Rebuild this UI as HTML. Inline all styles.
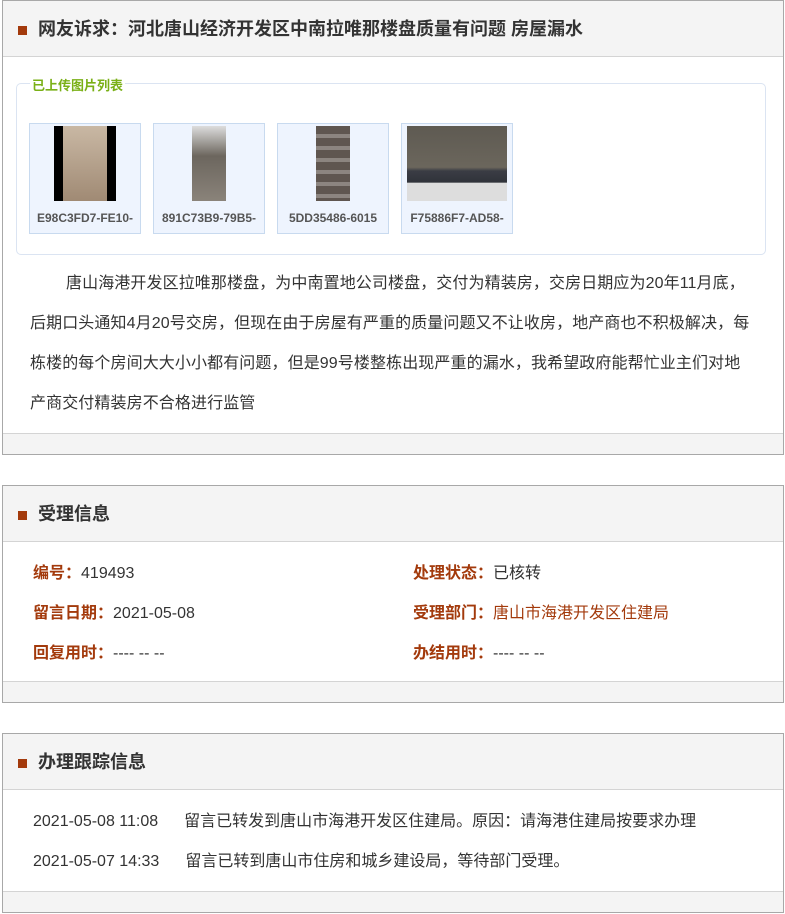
<!DOCTYPE html>
<html><head><meta charset="utf-8"><style>
*{margin:0;padding:0;box-sizing:border-box}
body{width:785px;height:914px;background:#fff;font-family:"Liberation Sans","Noto Sans CJK SC",sans-serif;color:#333;position:relative;overflow:hidden}
.p{position:absolute;left:2px;width:782px;border:1px solid #a8a8a8;background:#fff}
.h{height:56px;background:#f4f4f4;border-bottom:1px solid #d4d4d4;font-size:18px;font-weight:bold;color:#333;line-height:56px;padding-left:35px;position:relative}
.h:before{content:"";position:absolute;left:15px;top:25px;width:9px;height:9px;background:#a33a0c}
.f{position:absolute;left:0;right:0;bottom:0;height:21px;background:#f4f4f4;border-top:1px solid #d4d4d4}
fieldset{position:absolute;left:16px;top:83px;width:750px;height:172px;border:1px solid #dbe4f2;border-radius:5px}
.lg{position:absolute;left:30px;top:75px;background:#fff;color:#7ab017;font-size:13px;font-weight:bold;padding:0 2px}
.t{position:absolute;top:123px;width:112px;height:111px;background:#eef4fe;border:1px solid #c8daef;text-align:center}
.t .im{position:absolute;top:2px;height:75px}
.t .c{position:absolute;left:0;right:0;top:87px;font-size:12px;font-weight:bold;color:#555;white-space:nowrap;overflow:hidden}
.b{position:absolute;left:30px;top:264px;font-size:16px;line-height:40px;color:#333;white-space:nowrap;letter-spacing:0.1px}
.r{position:absolute;font-size:16px;color:#333;white-space:nowrap}
.r b{color:#a33a0c}
.o{color:#a33a0c}
</style></head><body>
<div class="p" style="top:0;height:455px">
<div class="h">网友诉求：河北唐山经济开发区中南拉唯那楼盘质量有问题 房屋漏水</div>
<div class="f"></div>
</div>
<fieldset></fieldset>
<div class="lg">已上传图片列表</div>
<div class="t" style="left:29px"><div class="im" style="left:24px;width:62px;background:#000"><div style="margin:0 auto;width:44px;height:75px;background:linear-gradient(#c9b8a4,#a08a74)"></div></div><div class="c">E98C3FD7-FE10-</div></div>
<div class="t" style="left:153px"><div class="im" style="left:38px;width:34px;background:linear-gradient(#ddd,#6c665e 40%,#8a837a)"></div><div class="c">891C73B9-79B5-</div></div>
<div class="t" style="left:277px"><div class="im" style="left:38px;width:34px;background:repeating-linear-gradient(#5f5650 0 8px,#8c8580 8px 12px)"></div><div class="c">5DD35486-6015</div></div>
<div class="t" style="left:401px"><div class="im" style="left:5px;width:100px;background:linear-gradient(#5e5a52 0,#6b665c 55%,#3a3c44 60%,#30333a 75%,#ddd 76%)"></div><div class="c">F75886F7-AD58-</div></div>
<div class="b"><span style="padding-left:36px"></span>唐山海港开发区拉唯那楼盘，为中南置地公司楼盘，交付为精装房，交房日期应为20年11月底，<br>后期口头通知4月20号交房，但现在由于房屋有严重的质量问题又不让收房，地产商也不积极解决，每<br>栋楼的每个房间大大小小都有问题，但是99号楼整栋出现严重的漏水，我希望政府能帮忙业主们对地<br>产商交付精装房不合格进行监管</div>

<div class="p" style="top:485px;height:218px">
<div class="h">受理信息</div>
<div class="f"></div>
</div>
<div class="r" style="left:33px;top:559px"><b>编号：</b>419493</div>
<div class="r" style="left:413px;top:559px"><b>处理状态：</b>已核转</div>
<div class="r" style="left:33px;top:599px"><b>留言日期：</b>2021-05-08</div>
<div class="r" style="left:413px;top:599px"><b>受理部门：</b><span class="o">唐山市海港开发区住建局</span></div>
<div class="r" style="left:33px;top:639px"><b>回复用时：</b>---- -- --</div>
<div class="r" style="left:413px;top:639px"><b>办结用时：</b>---- -- --</div>

<div class="p" style="top:733px;height:180px">
<div class="h">办理跟踪信息</div>
<div class="f"></div>
</div>
<div class="r" style="left:33px;top:807px">2021-05-08 11:08<span style="padding-left:26px"></span>留言已转发到唐山市海港开发区住建局。原因：请海港住建局按要求办理</div>
<div class="r" style="left:33px;top:847px">2021-05-07 14:33<span style="padding-left:26px"></span>留言已转到唐山市住房和城乡建设局，等待部门受理。</div>
</body></html>
